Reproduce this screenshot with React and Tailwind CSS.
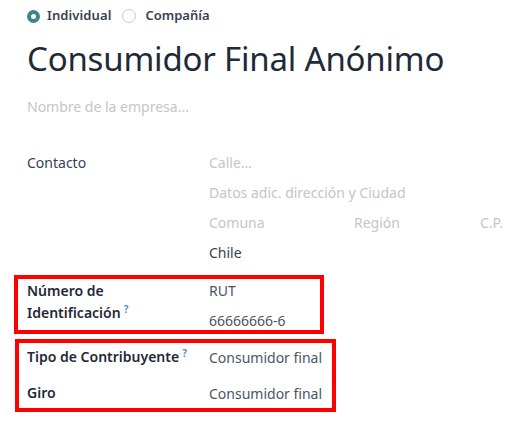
export default function App() {
  return (
    <div className="relative w-[523px] h-[434px] bg-white text-[14px] text-[#374151] overflow-hidden font-['Noto_Sans',sans-serif]">
      <div className="pl-[27px] pt-[7px]">
        <div className="flex items-center h-[18px] text-[13px] font-semibold text-[#374151]">
          <span className="w-[13px] h-[13px] rounded-full border-[4px] border-[#3f8585] bg-white mr-[7px]" />
          <span className="tracking-[0.1px]">Individual</span>
          <span className="w-[14px] h-[14px] rounded-full border border-[#c8cbcf] bg-white ml-[11px] mr-[9px]" />
          <span>Compañía</span>
        </div>
        <div className="mt-[14px] text-[33px] leading-[40px] text-[#1f2937] tracking-[-0.2px]">Consumidor Final Anónimo</div>
        <div className="mt-[18px] h-[20px] leading-[20px] text-[#c2c6cc]">Nombre de la empresa...</div>

        <div className="mt-[36px] grid grid-cols-[182px_1fr]">
          <div className="leading-[20px]">Contacto</div>
          <div className="flex flex-col">
            <div className="h-[30px] leading-[20px] text-[#c2c6cc]">Calle...</div>
            <div className="h-[30px] leading-[20px] text-[#c2c6cc]">Datos adic. dirección y Ciudad</div>
            <div className="h-[30px] leading-[20px] text-[#c2c6cc] grid grid-cols-[145px_126px_1fr]">
              <span>Comuna</span>
              <span>Región</span>
              <span>C.P.</span>
            </div>
            <div className="h-[30px] leading-[20px] text-[#374151]">Chile</div>
          </div>

          <div className="mt-[7px] font-semibold leading-[22px] text-[#1f2937]">
            Número de<br />Identificación<sup className="text-[#3b8bd0] font-semibold text-[10px] ml-[3px]">?</sup>
          </div>
          <div className="mt-[8px] flex flex-col text-[#4b5563]">
            <div className="h-[30px] leading-[20px]">RUT</div>
            <div className="h-[30px] leading-[20px]">66666666-6</div>
          </div>

          <div className="mt-[6px] font-semibold leading-[20px] text-[#1f2937] h-[36px]">
            Tipo de Contribuyente<sup className="text-[#3b8bd0] font-semibold text-[10px] ml-[3px]">?</sup>
          </div>
          <div className="mt-[7px] h-[36px] leading-[20px] text-[#4b5563]">Consumidor final</div>
          <div className="-mt-[1px] font-semibold leading-[20px] text-[#1f2937]">Giro</div>
          <div className="leading-[20px] text-[#4b5563]">Consumidor final</div>
        </div>
      </div>

      <div className="absolute left-[14px] top-[275px] w-[310px] h-[59px] border-[4px] border-[#ff0000]" />
      <div className="absolute left-[15px] top-[339px] w-[321px] h-[73px] border-[4px] border-[#ff0000]" />
    </div>
  );
}
